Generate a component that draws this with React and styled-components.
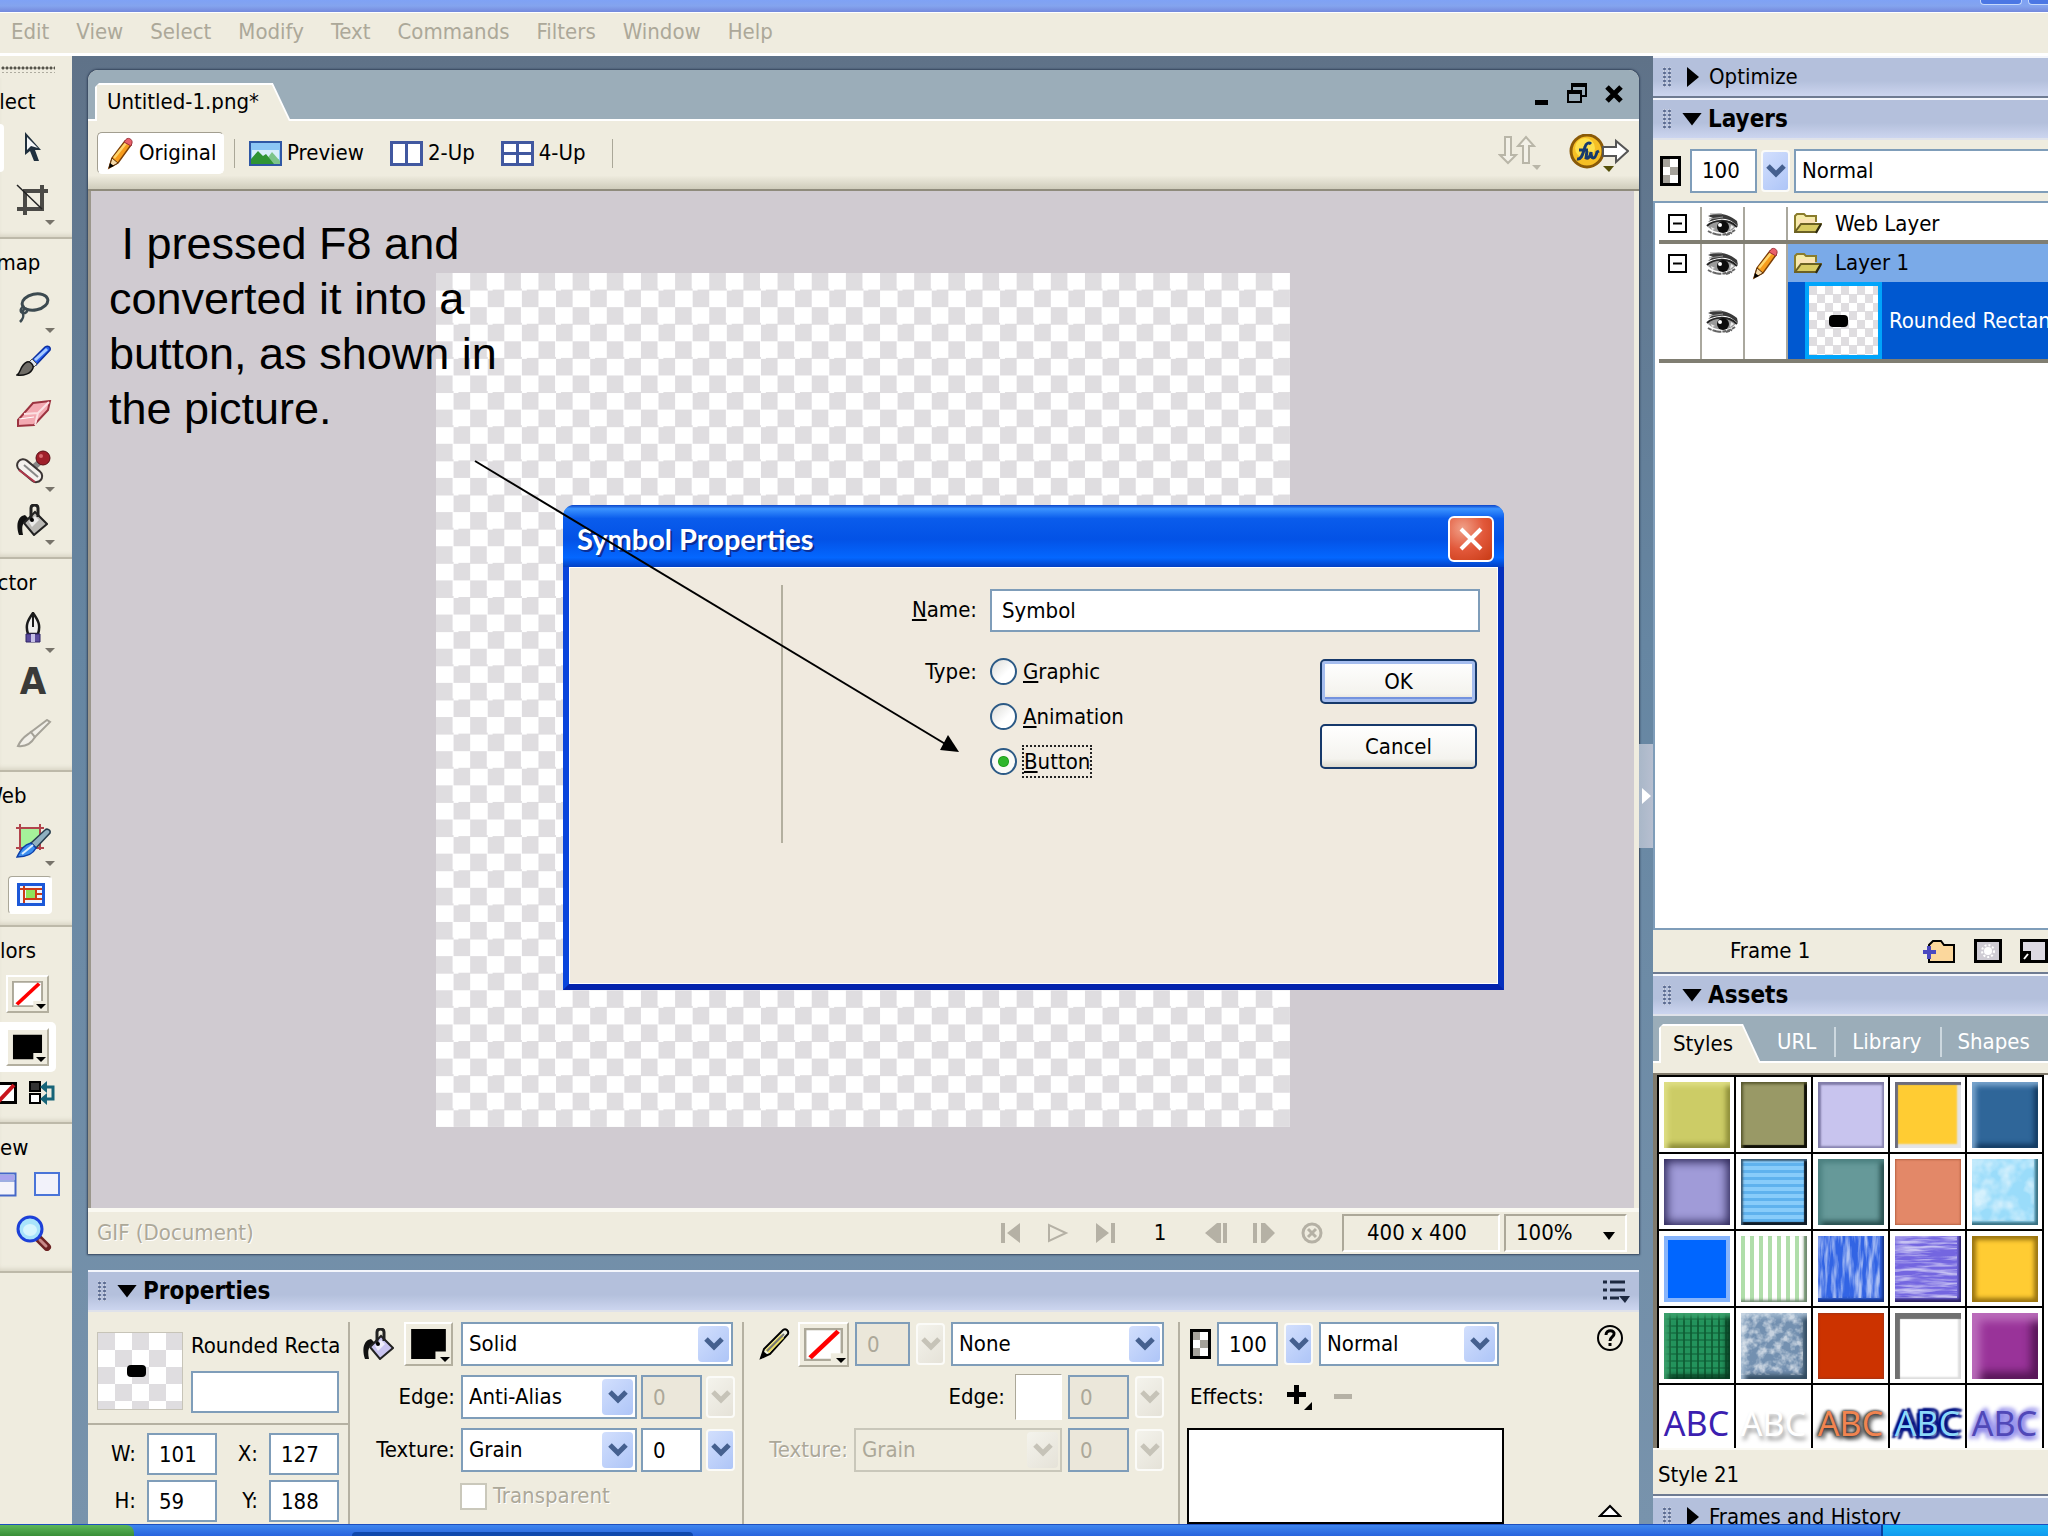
import { useState } from 'react';

import styled, { createGlobalStyle, css } from 'styled-components';

const beige = '#efecdf';
const line = '#aca899';
const fieldBorder = '#7f9db9';
const checker = (size) => css`
  background: repeating-conic-gradient(#fff 0 25%, #dfdde0 0 50%) 0 0 / ${size};
`;

const GlobalStyle = createGlobalStyle`
  * { box-sizing: border-box; }
  body {
    margin: 0;
    overflow: hidden;
    color: #000;
    font: 22px/28px "DejaVu Sans Condensed", "DejaVu Sans", sans-serif;
  }
  button, input, select { font: inherit; color: inherit; margin: 0; border-radius: 0; }
  button { background: none; border: 0; padding: 0; }
  svg { display: block; flex: none; }
`;

const Page = styled.div`
  position: relative;
  display: flex;
  flex-direction: column;
  height: 100vh;
  overflow: hidden;
  background: ${beige};
`;

const TitleBar = styled.div`
  display: flex;
  justify-content: flex-end;
  gap: 6px;
  flex: none;
  height: 13px;
  background: linear-gradient(#7fa2f5, #84a4ee 50%, #7489dc);
  border-bottom: 1px solid #fff;
`;

const CaptionButton = styled.button`
  width: 42px;
  height: 5px;
  border: 1px solid #c5d8fb;
  border-top: 0;
  border-radius: 0 0 4px 4px;
  background: #4b77e4;

  &:last-child { margin-right: -22px; }
`;

const MenuBar = styled.nav`
  display: flex;
  gap: 27px;
  align-items: center;
  flex: none;
  height: 43px;
  padding: 0 11px 2px;
  border-bottom: 3px solid #fff;
`;

const MenuItem = styled.button`
  color: ${line};
`;

const Workspace = styled.div`
  flex: 1;
  min-height: 0;
  display: grid;
  grid-template-columns: 72px minmax(0, 1fr) 395px;
  background: linear-gradient(#5f7288, #6686a2 40%, #7893ac);
`;

const Toolbox = styled.aside`
  overflow: hidden;
  background: ${beige};
`;

const Grip = styled.div`
  height: 8px;
  width: 54px;
  margin: 9px 0 5px 1px;
  background: radial-gradient(circle, #55534a 1px, transparent 2px) 0 0 / 4px 6px;
`;

const ToolSection = styled.section`
  height: ${(p) => p.$height}px;
  padding-top: 10px;
  border-bottom: 2px solid #bdb9a9;
  box-shadow: inset 0 -4px 4px -2px #d8d4c4;
`;

const ToolTitle = styled.div`
  width: 134px;
  margin: 0 0 4px -62px;
  text-align: center;
`;

const Tool = styled.button`
  position: relative;
  display: flex;
  align-items: center;
  width: 72px;
  height: 53px;
  padding-left: 16px;

  &::before {
    content: '';
    position: absolute;
    left: 0;
    top: 4px;
    width: 4px;
    height: 48px;
    border-radius: 0 4px 4px 0;
    background: ${(p) => (p.$besideActive ? '#fff' : 'none')};
  }
`;

const Flyout = styled.i`
  position: absolute;
  left: 45px;
  bottom: 1px;
  border: 5px solid transparent;
  border-top-color: ${(p) => p.$color || '#77736a'};
  border-bottom: 0;
`;

const PressedTool = styled(Tool)`
  width: 44px;
  height: 38px;
  margin: 9px 0 0 8px;
  padding-left: 8px;
  background: #fff;
  border: 1px solid;
  border-color: #aaa798 #fff #fff #aaa798;
  border-radius: 4px;
`;

const TextGlyph = styled.span`
  width: 34px;
  text-align: center;
  color: #3a3a38;
  font: bold 38px/40px "DejaVu Sans Condensed", sans-serif;
`;

const SwatchRow = styled.div`
  display: flex;
  align-items: center;
  width: 56px;
  height: 50px;
  margin-bottom: 3px;
  padding-left: 6px;
  border-radius: 0 5px 5px 0;
  background: ${(p) => (p.$active ? '#fff' : 'none')};
`;

const SwatchButton = styled.button`
  position: relative;
  flex: none;
  width: ${(p) => p.$width || 43}px;
  height: ${(p) => p.$height || 38}px;
  padding: 4px;
  border: 2px solid;
  border-color: #fff #b3af9f #b3af9f #fff;
  background: ${beige};

  svg { width: 100%; height: 100%; }
  ${Flyout} { left: auto; right: 1px; bottom: 2px; }
`;

const MiniRow = styled.div`
  display: flex;
  align-items: center;
  justify-content: space-between;
  width: ${(p) => p.$width || 56}px;
  height: 36px;
  margin-bottom: 4px;
`;

const Center = styled.main`
  display: flex;
  flex-direction: column;
  gap: 16px;
  min-width: 0;
  min-height: 0;
  padding: 14px 14px 0 16px;
  position: relative;
`;

const Splitter = styled.button`
  position: absolute;
  right: 0;
  top: 688px;
  width: 14px;
  height: 104px;
  padding-left: 3px;
  background: linear-gradient(90deg, #a9b7c8, #b7bfd0);
`;

const Document = styled.section`
  flex: 1;
  min-height: 0;
  display: flex;
  flex-direction: column;
  border-radius: 10px 10px 0 0;
  overflow: hidden;
  background: ${beige};
  box-shadow: 0 0 2px 1px #34445c;
`;

const DocTabs = styled.div`
  display: flex;
  align-items: flex-end;
  flex: none;
  height: 51px;
  padding-left: 7px;
  background: #9badb9;
  border-bottom: 2px solid #fff;
`;

const Tab = styled.button`
  position: relative;
  isolation: isolate;
  height: ${(p) => p.$height}px;
  padding: 0 ${(p) => p.$right}px 0 ${(p) => p.$left}px;
  margin-bottom: -2px;
  background: #fff;
  clip-path: polygon(0 4px, 4px 0, calc(100% - 18px) 0, 100% 100%, 0 100%);

  &::before {
    content: '';
    position: absolute;
    z-index: -1;
    inset: 2px 2px 0 2px;
    background: ${beige};
    clip-path: polygon(0 0, calc(100% - 17px) 0, 100% 100%, 0 100%);
  }
`;

const WindowButtons = styled.div`
  display: flex;
  align-items: center;
  gap: 18px;
  height: 51px;
  margin-left: auto;
  padding-right: 16px;
`;

const DocToolbar = styled.div`
  display: flex;
  align-items: center;
  flex: none;
  height: 70px;
  padding: 0 10px 4px 9px;
  border-bottom: 2px solid #8f8b7c;
  background: linear-gradient(${beige} 80%, #cfccbb);
`;

const ViewButton = styled.button`
  display: flex;
  align-items: center;
  gap: 5px;
  height: 42px;
  margin-right: 26px;
  white-space: nowrap;
`;

const ActiveView = styled(ViewButton)`
  width: 127px;
  margin-right: 10px;
  padding-left: 9px;
  background: #fff;
  border: 1px solid;
  border-color: #a29e90 #fff #fff #a29e90;
  border-radius: 5px;
`;

const Divider = styled.i`
  width: 1px;
  height: 29px;
  margin-right: 14px;
  background: #aaa798;
`;

const ToolbarRight = styled.div`
  display: flex;
  gap: 27px;
  margin-left: auto;
`;

const Canvas = styled.div`
  flex: 1;
  min-height: 0;
  display: flex;
  align-items: center;
  justify-content: center;
  margin-right: 5px;
  border-left: 3px solid #9b978c;
  background: #d0cbd1;
`;

const Artboard = styled.div`
  width: 854px;
  height: 854px;
  ${checker('4% 4%')}
`;

const StatusBar = styled.footer`
  display: flex;
  align-items: center;
  flex: none;
  height: 46px;
  padding: 0 12px 0 9px;
  border-top: 4px solid #faf9f2;
`;

const Disabled = styled.span`
  color: ${line};
  text-shadow: 1px 1px #fff;
`;

const Transport = styled.div`
  display: flex;
  align-items: center;
  gap: 26px;
  margin-left: auto;
  margin-right: 15px;
`;

const FrameNumber = styled.span`
  width: 38px;
  text-align: center;
`;

const StatusCell = styled.div`
  display: flex;
  align-items: center;
  justify-content: space-between;
  width: ${(p) => p.$width}px;
  height: 38px;
  padding: 0 ${(p) => p.$pad}px;
  margin-left: 4px;
  border: 2px solid;
  border-color: #aca899 #fff #fff #aca899;
  white-space: nowrap;
`;

const Panel = styled.section`
  display: flex;
  flex-direction: column;
  flex: none;
  height: 254px;
  overflow: hidden;
  background: ${beige};
`;

const PanelHeader = styled.header`
  display: flex;
  align-items: center;
  flex: none;
  height: 42px;
  padding: 0 9px;
  background: linear-gradient(#b4c0dc 60%, #ccd5ef);
  border-top: 2px solid #f4f6fc;
  border-bottom: 2px solid ${(p) => (p.$open ? '#dfe2ea' : '#6e7b92')};
  font-weight: ${(p) => (p.$open ? 'bold' : 'normal')};
  font-size: ${(p) => (p.$open ? 24 : 22)}px;
  white-space: nowrap;

  &::before {
    content: '';
    width: 11px;
    height: 20px;
    background: radial-gradient(circle, #5a6a90 1px, #e6ebf8 2px, transparent 2px) 0 0 / 5px 4px;
  }
`;

const Caret = styled.i`
  width: ${(p) => (p.$open ? 20 : 12)}px;
  height: ${(p) => (p.$open ? 13 : 20)}px;
  margin: ${(p) => (p.$open ? '0 6px 0 9px' : '0 10px 0 14px')};
  background: #000;
  clip-path: ${(p) => (p.$open ? 'polygon(0 0, 100% 0, 50% 100%)' : 'polygon(0 0, 100% 50%, 0 100%)')};
`;

const MenuIcon = styled.svg`
  margin-left: auto;
`;

const PropBody = styled.div`
  flex: 1;
  min-height: 0;
  display: grid;
  grid-template-columns: 262px 394px 436px minmax(0, 1fr);
  grid-template-rows: minmax(0, 1fr);
  padding-top: 10px;
`;

const SizeGroup = styled.div`
  border-right: 2px solid #b5b1a2;
`;

const PropGroup = styled.div`
  display: flex;
  flex-direction: column;
  gap: 9px;
  padding: 0 ${(p) => p.$right}px 0 ${(p) => p.$left}px;
  border-right: 2px solid #b5b1a2;
`;

const Row = styled.div`
  display: flex;
  align-items: center;
  flex: none;
  gap: ${(p) => p.$gap || 6}px;
  height: 44px;
  justify-content: ${(p) => (p.$end ? 'flex-end' : 'flex-start')};
`;

const Lead = styled.div`
  display: flex;
  align-items: center;
  justify-content: ${(p) => (p.$text ? 'flex-end' : 'flex-start')};
  gap: 10px;
  flex: none;
  width: 95px;
  padding-right: ${(p) => (p.$text ? 2 : 0)}px;
`;

const Field = styled.input`
  width: ${(p) => p.$width}px;
  height: ${(p) => p.$height || 44}px;
  flex: none;
  padding: 0 0 0 10px;
  border: 2px solid ${fieldBorder};
  background: #fff;

  &:disabled { background: #ebe7da; color: ${line}; }
`;

const DropWrap = styled.span`
  position: relative;
  display: block;
  flex: ${(p) => (p.$width ? 'none' : 1)};
  width: ${(p) => (p.$width ? `${p.$width}px` : 'auto')};
  height: 44px;
`;

const DropSelect = styled.select`
  appearance: none;
  width: 100%;
  height: 100%;
  padding: 0 36px 0 6px;
  border: 2px solid ${fieldBorder};
  background: #fff;
  opacity: 1;

  &:disabled { background: ${beige}; color: ${line}; border-color: #c9c7ba; }
`;

const dropFace = css`
  display: flex;
  align-items: center;
  justify-content: center;
  border-radius: 4px;
  color: ${(p) => (p.$off ? '#c6c3b8' : '#45608f')};
  background: ${(p) => (p.$off ? 'linear-gradient(135deg, #f4f3ec, #e5e2d8)' : 'linear-gradient(135deg, #d2dffd, #aec5f7)')};
`;

const DropArrow = styled.span`
  ${dropFace}
  position: absolute;
  top: 4px;
  right: 4px;
  bottom: 4px;
  width: 31px;
  pointer-events: none;
`;

const DropButton = styled.button`
  ${dropFace}
  flex: none;
  width: 29px;
  height: 42px;
  border: 2px solid #fbfbf8;
`;

const Thumb = styled.div`
  display: flex;
  align-items: center;
  justify-content: center;
  flex: none;
  width: ${(p) => p.$width}px;
  height: ${(p) => p.$height}px;
  padding: ${(p) => (p.$selected ? '0 10px 0 0' : '0 8px 0 0')};
  border: ${(p) => (p.$selected ? '4px solid #00a5fb' : '1px solid #c7c4b8')};
  ${(p) => checker(p.$selected ? '16px 17px' : '34px 34px')}

  &::after {
    content: '';
    width: 19px;
    height: 12px;
    border-radius: 4px;
    background: #000;
  }
`;

const ObjectInfo = styled.div`
  display: flex;
  gap: 8px;
  height: 103px;
  padding: 10px 8px 0 9px;
  border-bottom: 2px solid #b5b1a2;
`;

const ObjectName = styled.label`
  flex: 1;
  min-width: 0;
  overflow: hidden;
  white-space: nowrap;

  ${Field} { display: block; margin-top: 11px; }
`;

const Dimensions = styled.div`
  display: grid;
  grid-template-columns: 45px 70px 42px 70px;
  gap: 5px 5px;
  align-items: center;
  padding: 8px 0 0 9px;

  label { padding-right: 6px; text-align: right; }
`;

const WhiteBox = styled.span`
  width: 47px;
  height: 46px;
  margin-left: 4px;
  border: 1px solid;
  border-color: #aca899 #fff #fff #aca899;
  background: #fff;
`;

const CheckLabel = styled.label`
  display: flex;
  align-items: center;
  gap: 6px;
  height: 30px;
  margin-left: 98px;
  color: ${line};
  text-shadow: 1px 1px #fff;

  input {
    appearance: none;
    width: 27px;
    height: 27px;
    border: 2px solid #cac8bb;
    background: #fff;
  }
`;

const EffectsBody = styled.div`
  display: flex;
  justify-content: space-between;
  padding: 0 15px 0 10px;
`;

const EffectsList = styled.div`
  width: 317px;
  height: 110px;
  margin-left: -3px;
  border: 2px solid #000;
  background: #fff;
`;

const Stack = styled.div`
  display: flex;
  flex-direction: column;
  gap: 9px;
`;

const SideIcons = styled.div`
  display: flex;
  flex-direction: column;
  align-items: center;
  justify-content: space-between;
  padding: 2px 0 6px;
`;

const Dock = styled.aside`
  display: flex;
  flex-direction: column;
  min-height: 0;
  overflow: hidden;
  background: ${beige};
`;

const LayerSettings = styled.div`
  display: flex;
  align-items: center;
  gap: 4px;
  flex: none;
  height: 61px;
  padding-left: 7px;

  svg + ${Field} { margin-left: 5px; }
`;

const LayerList = styled.div`
  flex: 1;
  min-height: 0;
  padding: 4px 0 0 4px;
  background: #fff;
  border: 2px solid ${fieldBorder};
  border-right: 0;
`;

const LayerRow = styled.div`
  display: grid;
  grid-template-columns: 43px 43px 43px 1fr;
  height: ${(p) => p.$height}px;
  border-bottom: ${(p) => (p.$last ? 4 : 0)}px solid #807e72;
`;

const LayerCell = styled.div`
  display: flex;
  align-items: center;
  justify-content: ${(p) => (p.$center ? 'center' : 'flex-end')};
  padding-right: ${(p) => (p.$center ? 0 : 13)}px;
  border-right: 2px solid #aaa89e;
`;

const LayerName = styled.div`
  display: flex;
  align-items: center;
  gap: ${(p) => (p.$item ? 7 : 13)}px;
  padding-left: ${(p) => (p.$item ? 17 : 6)}px;
  overflow: hidden;
  white-space: nowrap;
  background: ${(p) => p.$bg || '#fff'};
  color: ${(p) => (p.$item ? '#fff' : '#000')};
`;

const FrameRow = styled.div`
  display: flex;
  align-items: center;
  flex: none;
  gap: 18px;
  height: 44px;
  padding-left: 77px;
  border-bottom: 2px solid #6e7b92;
  white-space: nowrap;

  span { width: 190px; }
`;

const AssetTabs = styled.div`
  display: flex;
  align-items: flex-end;
  flex: none;
  height: 47px;
  padding-left: 6px;
  background: #9badb9;
  border-bottom: 2px solid #fff;
`;

const QuietTab = styled.button`
  height: 38px;
  padding: 0 18px 0 16px;
  color: #fff;
  flex: none;
`;

const TabDivider = styled.i`
  width: 2px;
  height: 30px;
  margin-bottom: 4px;
  background: #cdd8df;
`;

const StyleGrid = styled.div`
  display: grid;
  grid-template-columns: repeat(5, 77px);
  grid-auto-rows: 77px;
  flex: none;
  height: 375px;
  overflow: hidden;
  margin-top: 10px;
  border-left: 4px solid #807a6c;
  border-top: 2px solid #807a6c;
  background: #fff;
`;

const StyleCell = styled.button`
  display: flex;
  align-items: center;
  justify-content: center;
  width: 79px;
  height: 79px;
  border: 2px solid #000;
`;

const StyleSwatch = styled.span`
  width: 66px;
  height: 66px;
  background: ${(p) => p.$bg};
  box-shadow: ${(p) => p.$shadow};
`;

const StyleText = styled.span`
  font: 34px/40px "Noto Sans", sans-serif;
  color: ${(p) => p.$color};
  text-shadow: ${(p) => p.$shadow};
`;

const StyleName = styled.div`
  flex: none;
  height: 46px;
  padding: 11px 5px 0;
  border-top: 2px solid #fbfaf4;
`;

const ClippedHeader = styled.div`
  flex: none;
  height: 30px;
  overflow: hidden;
  border-top: 2px solid #6e7b92;
`;

const Taskbar = styled.footer`
  display: grid;
  grid-template-columns: 134px 218px 341px 1fr 167px;
  align-items: end;
  flex: none;
  height: 12px;
  background: linear-gradient(#3f86ee, #2763dd);
  border-top: 1px solid #1d4fbf;
`;

const Start = styled.button`
  height: 11px;
  border-radius: 0 8px 0 0;
  background: linear-gradient(#5db75a, #388e36);
`;

const TaskButton = styled.button`
  grid-column: 3;
  height: 4px;
  border-radius: 4px 4px 0 0;
  background: #0e48ad;
`;

const Tray = styled.div`
  grid-column: 5;
  height: 11px;
  border-left: 2px solid #0b3f9c;
  background: linear-gradient(#17b4f6, #109aee);
`;

const Dialog = styled.form`
  position: absolute;
  left: 563px;
  top: 505px;
  width: 941px;
  border: 6px solid #0a45dc;
  border-top: 0;
  border-bottom-color: #0423ac;
  border-right-color: #0530bd;
  border-radius: 12px 12px 0 0;
  background: #0a55e8;
`;

const DialogTitle = styled.header`
  display: flex;
  align-items: center;
  justify-content: space-between;
  height: 62px;
  margin: 0 -6px;
  padding: 5px 10px 0 14px;
  border-radius: 11px 11px 0 0;
  background: linear-gradient(#0b43c8, #3b93ff 6%, #0a5cec 22%, #0352e6 55%, #0467ff 85%, #0340c4);
  color: #fff;
  font: bold 29px/36px Lato, sans-serif;
  text-shadow: 2px 2px #0b2f96;
`;

const CloseButton = styled.button`
  width: 46px;
  height: 46px;
  border: 2px solid #fff;
  border-radius: 6px;
  padding: 7px;
  background: radial-gradient(circle at 30% 25%, #f0a088, #e2583a 50%, #c83a14);
`;

const DialogBody = styled.div`
  display: grid;
  grid-template-columns: 213px 1fr;
  height: 417px;
  padding: 17px 17px 0 0;
  border: 1px solid #fff;
  background: #f0eadf;
`;

const Pane = styled.div`
  height: 258px;
  border-right: 2px solid #b3af9f;
`;

const DialogForm = styled.div`
  display: grid;
  grid-template-columns: 207px 1fr 160px;
  grid-template-rows: 43px 138px;
  row-gap: 29px;
  padding-top: 4px;
`;

const FieldLabel = styled.label`
  justify-self: end;
  padding: 7px 13px 0 0;
`;

const TypeLabel = styled.span`
  justify-self: end;
  padding: 0 13px 0 0;
  margin-top: -3px;
`;

const NameField = styled.input`
  grid-column: 2 / 4;
  height: 43px;
  padding: 0 10px;
  border: 2px solid ${fieldBorder};
  background: #fff;
`;

const RadioList = styled.div`
  display: flex;
  flex-direction: column;
  gap: 17px;
  margin-top: -4px;
`;

const RadioLabel = styled.label`
  display: flex;
  align-items: center;
  gap: 5px;
  height: 28px;

  input {
    appearance: none;
    width: 27px;
    height: 27px;
    border: 2px solid #2c5a86;
    border-radius: 50%;
    background: linear-gradient(135deg, #dcdcd8, #fff 60%);
  }

  input:checked {
    background: radial-gradient(circle, #2fb62c 4px, #23a11f 5px, transparent 6px), #fafaf7;
  }

  span {
    height: 33px;
    line-height: 31px;
    border: 1px dotted transparent;
  }

  input:checked + span { border: 2px dotted #222; line-height: 29px; }
`;

const DialogButtons = styled.div`
  display: flex;
  flex-direction: column;
  gap: 20px;
  align-items: flex-start;
  margin-top: -2px;
`;

const DialogButton = styled.button`
  width: 157px;
  height: 45px;
  border: 2px solid #16396b;
  border-radius: 5px;
  background: linear-gradient(#fff, #f4f3ee 80%, #dcd9ce);
  box-shadow: ${(p) => (p.$primary ? 'inset 0 0 0 3px #a5bdee, inset 0 -5px 0 #7492de' : 'none')};
`;

const Note = styled.p`
  position: absolute;
  left: 109px;
  top: 216px;
  margin: 0;
  font: 45px/55px "Liberation Sans", Arial, sans-serif;
  white-space: pre;
`;

const Pointer = styled.svg`
  position: absolute;
  left: 470px;
  top: 455px;
  pointer-events: none;
`;

const Chevron = () => (
  <svg width="20" height="14" viewBox="0 0 20 14" fill="none" stroke="currentColor" strokeWidth="5">
    <path d="M2 2l8 8 8-8" />
  </svg>
);

const Dropdown = ({ label, value, width, disabled }) => (
  <DropWrap $width={width}>
    <DropSelect aria-label={label} disabled={disabled} defaultValue={value}>
      <option>{value}</option>
    </DropSelect>
    <DropArrow $off={disabled}><Chevron /></DropArrow>
  </DropWrap>
);

const NumberField = ({ label, value, width = 61, disabled }) => (
  <>
    <Field aria-label={label} $width={width} defaultValue={value} disabled={disabled} />
    <DropButton type="button" aria-label={`${label} slider`} $off={disabled}><Chevron /></DropButton>
  </>
);

const OpacityIcon = () => (
  <svg width="21" height="30" viewBox="0 0 21 30">
    <path fill="#fff" stroke="#000" strokeWidth="3" d="M1.5 1.5h18v27h-18z" />
    <path fill="#a5a29b" d="M3 3h7v8H3zM10 11h8v8h-8zM3 19h7v8H3z" />
  </svg>
);

const PencilIcon = () => (
  <svg width="27" height="34" viewBox="0 0 27 34">
    <path d="M2 32l3-10L18 5l6 4-13 18z" fill="#f79c1c" stroke="#7d4008" strokeWidth="1.5" />
    <path d="M7 22L19 7" stroke="#ffd56a" strokeWidth="2.5" />
    <path d="M18 5c2-5 8-2 7 2l-1 3-7-4z" fill="#e8606a" stroke="#9c3038" />
    <path d="M2 32l3-10 6 5z" fill="#f5d9a8" stroke="#5c3208" />
    <path d="M2 32l1-5 4 3z" fill="#000" />
  </svg>
);

const PreviewIcon = () => (
  <svg width="33" height="25" viewBox="0 0 33 25">
    <path fill="#8cc6f5" stroke="#2f57a5" strokeWidth="2" d="M1 1h31v23H1z" />
    <path fill="#d8eefb" d="M3 9h27v9H3z" />
    <path fill="#7cc48a" d="M14 23l9-12 8 9v3z" />
    <path fill="#2f9434" d="M2 18l7-8 5 5 3-2 8 10H2z" />
  </svg>
);

const SplitIcon = ({ four }) => (
  <svg width="33" height="25" viewBox="0 0 33 25">
    <path fill="#fff" stroke="#4158a0" strokeWidth="3" d="M1.500 1.500h30v22h-30z" />
    <path stroke="#4158a0" strokeWidth="3" d={four ? 'M16.500 1v23M1 12.500h31' : 'M16.500 1v23'} />
  </svg>
);

const EyeIcon = () => (
  <svg width="33" height="24" viewBox="0 0 33 24" fill="none" stroke="#222">
    <path d="M2 15C7 6 22 5 30 14c-4 8-20 9-28 1z" fill="#9a9a9a" stroke="none" />
    <path d="M2 4c9-4 19-3 29 5l1 5-4-3C21 5 13 6 2 10l5-4z" fill="#3a3a3a" stroke="none" />
    <path d="M4 2h12M3 7l14-2" stroke="#999" />
    <path d="M1 14C7 8 22 6 31 15" strokeWidth="2" />
    <circle cx="17" cy="15" r="6" fill="#0c0c0c" stroke="none" />
    <circle cx="14" cy="13" r="2" stroke="none" fill="#fff" />
    <path d="M5 15l4 2-3 1zM25 13l3 2-4 3z" fill="#eee" stroke="none" />
    <path d="M2 19c8 5 19 5 27-1M9 22l5 1M20 23l6-2" stroke="#666" strokeWidth="2" strokeDasharray="4 1" />
  </svg>
);

const FolderIcon = () => (
  <svg width="28" height="21" viewBox="0 0 28 21">
    <path d="M1 19V3l2-2h7l2 2h10v6" fill="#f5eca8" stroke="#8a7c2c" strokeWidth="2" />
    <path d="M4 6h17v6H4z" fill="#fbe3b4" />
    <path d="M1 19l6-8h20l-5 8z" fill="#d8cb62" stroke="#6c6123" strokeWidth="2" />
    <path d="M22 20l5-9" stroke="#2e2a10" strokeWidth="2" />
  </svg>
);

const MinusBox = () => (
  <svg width="19" height="19" viewBox="0 0 19 19">
    <path fill="#fff" stroke="#000" strokeWidth="2" d="M1 1h17v17H1z" />
    <path stroke="#000" strokeWidth="2" d="M5 9.500h9" />
  </svg>
);

const BucketIcon = ({ fill = '#b9b8b4' }) => (
  <svg width="32" height="32" viewBox="0 0 32 32">
    <path d="M3 31C-1 19 3 12 9 11l4 4c-6 2-8 7-6 16z" fill="#111" />
    <path d="M8 19L19 8l12 12-13 11z" fill={fill} stroke="#222" strokeWidth="2" />
    <path d="M13 18l6-6 4 4-7 7z" fill="#fff" opacity=".7" />
    <path d="M15 16V4c0-4 7-4 7 0v9" fill="none" stroke="#222" strokeWidth="3" />
    <circle cx="16" cy="16" r="2" />
  </svg>
);

const tools = {
  pointer: (
    <svg width="30" height="32" viewBox="0 0 30 32">
      <path d="M9 1v23l5-4 4 10h5l-4-11h6z" fill="#1f2f3d" />
      <path d="M11 6v13l4-4 7 2z" fill="#f4f6f8" />
    </svg>
  ),
  crop: (
    <svg width="34" height="32" viewBox="0 0 34 32" fill="none" stroke="#4b4a46" strokeWidth="4">
      <path d="M9 31V7h23M1 25h25V1" />
      <path d="M1 1l25 24" strokeWidth="1.5" stroke="#222" />
    </svg>
  ),
  lasso: (
    <svg width="34" height="32" viewBox="0 0 34 32" fill="none" stroke="#3c4a50" strokeWidth="3">
      <ellipse cx="19" cy="10" rx="13" ry="8" transform="rotate(-12 19 10)" />
      <path d="M8 14c-5 3-4 8 1 7 5-2 0-7-2-2-1 4 3 5-3 11" strokeWidth="2.500" />
    </svg>
  ),
  brush: (
    <svg width="36" height="32" viewBox="0 0 36 32">
      <path d="M15 16L29 2c3-2 6 0 5 3L20 20z" fill="#2a62f0" stroke="#0c2fa0" strokeWidth="1.500" />
      <path d="M19 15L31 4" stroke="#a9ccff" strokeWidth="3" />
      <path d="M13 17l3-3 5 5-3 3z" fill="#dfe6ee" stroke="#555" />
      <path d="M1 30c4-2 3-10 10-13 3-1 7 3 6 6-2 6-10 8-16 7z" fill="#6f6c66" stroke="#111" strokeWidth="1.500" />
    </svg>
  ),
  eraser: (
    <svg width="36" height="28" viewBox="0 0 36 28" stroke="#9c3340" strokeWidth="2">
      <path d="M2 20L17 3l17-2-2 9-14 15-16 1z" fill="#f3aab2" />
      <path d="M8 14l14-1 11-11M22 13l-3 12" fill="none" stroke="#fbe0e3" />
      <path d="M3 19l15-2" stroke="#fff" strokeWidth="1" />
    </svg>
  ),
  stamp: (
    <svg width="36" height="34" viewBox="0 0 36 34">
      <path d="M16 19l11-10" stroke="#888" strokeWidth="6" />
      <rect x="-1" y="15" width="29" height="12" rx="6" transform="rotate(40 14 21)" fill="#f4f1ee" stroke="#3b3534" strokeWidth="2" />
      <path d="M3 20l16 12" stroke="#b0364a" strokeWidth="2" />
      <path d="M8 15l14 12" stroke="#888" strokeWidth="2" />
      <circle cx="27" cy="8" r="7" fill="#9f1f2a" stroke="#5a0d14" />
      <circle cx="25" cy="6" r="2" fill="#d86a70" />
    </svg>
  ),
  bucket: <BucketIcon />,
  pen: (
    <svg width="34" height="32" viewBox="0 0 34 32">
      <path d="M17 1c5 7 8 12 5 21H12C9 13 12 8 17 1z" fill="#f2f2f0" stroke="#1b1b1b" strokeWidth="2.500" />
      <path d="M17 2v13" stroke="#1b1b1b" strokeWidth="2" />
      <path d="M10 22h14v8H10z" fill="#5a4a9c" stroke="#2e2466" />
      <path d="M15 22h4v8h-4z" fill="#c5bfe6" />
    </svg>
  ),
  knife: (
    <svg width="36" height="30" viewBox="0 0 36 30" fill="#f1efe8" stroke="#a5a298" strokeWidth="2">
      <path d="M2 27C6 18 10 17 15 13l4 5c-4 7-9 10-17 9z" />
      <path d="M15 13L31 1l3 2-15 15z" />
    </svg>
  ),
  slice: (
    <svg width="36" height="34" viewBox="0 0 36 34">
      <path d="M4 4h20v20H4z" fill="#a5f29a" />
      <path d="M4 0v26M24 0v26M0 4h28M0 24h28" stroke="#b2444c" strokeWidth="2" />
      <path d="M15 19L29 6c2-2 6 0 5 3L20 24z" fill="#8fb0c0" stroke="#263c4c" strokeWidth="1.500" />
      <path d="M1 33c4-8 7-12 14-14l5 5c-3 6-9 9-19 9z" fill="#3c8ef0" stroke="#0d3fa8" strokeWidth="1.500" />
      <path d="M6 30l11-9" stroke="#dcefff" strokeWidth="2" />
    </svg>
  ),
  slices: (
    <svg width="28" height="24" viewBox="0 0 28 24">
      <path d="M1.500 1.500h25v20h-25z" fill="#eef4ff" stroke="#1c58d8" strokeWidth="3" />
      <path d="M9 7h10v8H9z" fill="#8ee45a" />
      <path d="M7 3v17M3 6h22M7 16h18M19 6v10M19 11h6" stroke="#cc3b16" strokeWidth="2" fill="none" />
    </svg>
  ),
  zoom: (
    <svg width="36" height="36" viewBox="0 0 36 36">
      <path d="M23 24l8 8" stroke="#6e2323" strokeWidth="8" strokeLinecap="round" />
      <path d="M24 25l6 6" stroke="#c88a88" strokeWidth="3" strokeLinecap="round" />
      <circle cx="14" cy="14" r="12" fill="#a9e4fb" stroke="#1c40d8" strokeWidth="3" />
      <ellipse cx="14" cy="15" rx="7" ry="6" fill="#d7f6fe" />
    </svg>
  ),
};

const NoneSwatch = () => (
  <svg viewBox="0 0 32 30" preserveAspectRatio="none">
    <path d="M1 1h30v28H1z" fill="#fff" stroke="#aca899" strokeWidth="2" />
    <path d="M5 27L28 3" stroke="#f00" strokeWidth="4" />
    <path d="M22 23h10v7H22z" fill={beige} />
  </svg>
);

const BlackSwatch = () => (
  <svg viewBox="0 0 32 30" preserveAspectRatio="none">
    <path d="M1 1h30v21h-9v7H1z" />
  </svg>
);

const ToolButton = ({ name, flyout, besideActive }) => (
  <Tool type="button" aria-label={name} $besideActive={besideActive}>
    {tools[name]}
    {flyout && <Flyout />}
  </Tool>
);

const Tools = () => (
  <Toolbox>
    <Grip />
    <ToolSection $height={161}>
      <ToolTitle>Select</ToolTitle>
      <ToolButton name="pointer" besideActive />
      <ToolButton name="crop" flyout />
    </ToolSection>
    <ToolSection $height={320}>
      <ToolTitle>Bitmap</ToolTitle>
      <ToolButton name="lasso" flyout />
      <ToolButton name="brush" />
      <ToolButton name="eraser" />
      <ToolButton name="stamp" flyout />
      <ToolButton name="bucket" flyout />
    </ToolSection>
    <ToolSection $height={213}>
      <ToolTitle>Vector</ToolTitle>
      <ToolButton name="pen" flyout />
      <Tool type="button" aria-label="text"><TextGlyph>A</TextGlyph></Tool>
      <ToolButton name="knife" />
    </ToolSection>
    <ToolSection $height={155}>
      <ToolTitle>Web</ToolTitle>
      <ToolButton name="slice" flyout />
      <PressedTool type="button" aria-label="show slices">{tools.slices}</PressedTool>
    </ToolSection>
    <ToolSection $height={197}>
      <ToolTitle>Colors</ToolTitle>
      <SwatchRow>
        <SwatchButton type="button" aria-label="stroke"><NoneSwatch /><Flyout $color="#000" /></SwatchButton>
      </SwatchRow>
      <SwatchRow $active>
        <SwatchButton type="button" aria-label="fill"><BlackSwatch /><Flyout $color="#000" /></SwatchButton>
      </SwatchRow>
      <MiniRow>
        <svg width="17" height="22" viewBox="0 0 17 22">
          <path d="M-8 1.500h23.500v19H-8" fill="#fff" stroke="#000" strokeWidth="3" />
          <path d="M-2 20L14 3" stroke="#c8141c" strokeWidth="4" />
        </svg>
        <svg width="27" height="24" viewBox="0 0 27 24">
          <path d="M1 1h10v9H1z" fill="#333" stroke="#000" strokeWidth="2" />
          <path d="M1 13h10v9H1z" fill="#fff" stroke="#000" strokeWidth="2" />
          <path d="M16 6h8v12h-8" fill="none" stroke="#176478" strokeWidth="3" />
          <path d="M11 6l7-6v12zM11 18l7-6v12z" fill="#176478" />
        </svg>
      </MiniRow>
    </ToolSection>
    <ToolSection $height={149}>
      <ToolTitle>View</ToolTitle>
      <MiniRow $width={60}>
        <svg width="17" height="25" viewBox="0 0 17 25">
          <path d="M-8 1.500h23.500v22H-8z" fill="#f4f4fa" stroke="#4668c8" strokeWidth="2" />
          <path d="M0 3h14v5H0z" fill="#a9a4ee" />
          <path d="M0 9h15" stroke="#4668c8" />
        </svg>
        <svg width="26" height="25" viewBox="0 0 26 25">
          <path d="M1 1h24v22H1z" fill="#f2f2fa" stroke="#4a74d8" strokeWidth="2" />
        </svg>
      </MiniRow>
      <ToolButton name="zoom" />
    </ToolSection>
  </Toolbox>
);

const DocumentWindow = () => (
  <Document>
    <DocTabs>
      <Tab type="button" $height={38} $left={12} $right={32}>Untitled-1.png*</Tab>
      <WindowButtons>
        <button type="button" aria-label="Minimize">
          <svg width="14" height="26" viewBox="0 0 14 26"><path d="M0 19h13v5H0z" /></svg>
        </button>
        <button type="button" aria-label="Restore">
          <svg width="20" height="21" viewBox="0 0 20 21" fill="none" stroke="#000" strokeWidth="2">
            <path d="M5 7V1h14v12h-5" /><path d="M5 2h14" strokeWidth="4" />
            <path d="M1 8h13v11H1z" /><path d="M1 9h13" strokeWidth="4" />
          </svg>
        </button>
        <button type="button" aria-label="Close">
          <svg width="18" height="18" viewBox="0 0 18 18" stroke="#000" strokeWidth="5"><path d="M2 2l14 14M16 2L2 16" /></svg>
        </button>
      </WindowButtons>
    </DocTabs>
    <DocToolbar>
      <ActiveView type="button"><PencilIcon />Original</ActiveView>
      <Divider />
      <ViewButton type="button"><PreviewIcon />Preview</ViewButton>
      <ViewButton type="button"><SplitIcon />2-Up</ViewButton>
      <ViewButton type="button"><SplitIcon four />4-Up</ViewButton>
      <Divider />
      <ToolbarRight>
        <button type="button" aria-label="File management">
          <svg width="44" height="36" viewBox="0 0 44 36" fill="#f3f1e8" stroke="#b9b6a8" strokeWidth="2">
            <path d="M7 2h6v18h5l-8 8-8-8h5zM25 28h6V11h5l-8-9-8 9h5z" />
            <path d="M34 30h9l-4 5z" fill="#b9b6a8" stroke="none" />
          </svg>
        </button>
        <button type="button" aria-label="Quick export">
          <svg width="60" height="38" viewBox="0 0 60 38">
            <circle cx="18" cy="17" r="16" fill="#f6bf25" stroke="#8a5a08" strokeWidth="3" />
            <circle cx="16" cy="14" r="10" fill="#fde04c" />
            <path d="M8 25c5 1 6-6 8-12 1-4 4-5 6-3M10 16h9M18 17l-1 7c2 1 4-1 5-6 0 8 4 8 6 0l2-1" fill="none" stroke="#153a6e" strokeWidth="3" />
            <path d="M34 13h13V7l12 10-12 11v-6H34z" fill="#fff" stroke="#555" strokeWidth="2" />
            <path d="M34 32h11l-5 6z" fill="#55500a" />
          </svg>
        </button>
      </ToolbarRight>
    </DocToolbar>
    <Canvas><Artboard /></Canvas>
    <StatusBar>
      <Disabled>GIF (Document)</Disabled>
      <Transport>
        <svg width="20" height="20" viewBox="0 0 20 20" fill="#b5b1a5"><path d="M0 0h4v20H0zM19 0v20L6 10z" /></svg>
        <svg width="22" height="20" viewBox="0 0 22 20" fill="none" stroke="#b5b1a5" strokeWidth="2"><path d="M2 2v16l17-8z" /></svg>
        <svg width="20" height="20" viewBox="0 0 20 20" fill="#b5b1a5"><path d="M16 0h4v20h-4zM1 0v20l13-10z" /></svg>
        <FrameNumber>1</FrameNumber>
        <svg width="22" height="20" viewBox="0 0 22 20" fill="#b5b1a5"><path d="M18 0h4v20h-4zM12 0h4v20h-4L0 10z" /></svg>
        <svg width="22" height="20" viewBox="0 0 22 20" fill="#b5b1a5"><path d="M0 0h4v20H0zM8 0h4l10 10-10 10H8z" /></svg>
        <svg width="22" height="22" viewBox="0 0 22 22" fill="none" stroke="#b5b1a5"><circle cx="11" cy="11" r="9" strokeWidth="3" /><path d="M7 7l8 8M15 7l-8 8" strokeWidth="3" /></svg>
      </Transport>
      <StatusCell $width={158} $pad={23}>400 x 400</StatusCell>
      <StatusCell $width={123} $pad={10}>
        100%
        <svg width="12" height="14" viewBox="0 0 12 14"><path d="M0 6h12l-6 8z" /></svg>
      </StatusCell>
    </StatusBar>
  </Document>
);

const Properties = () => (
  <Panel>
    <PanelHeader $open>
      <Caret $open />
      Properties
      <MenuIcon width="27" height="23" viewBox="0 0 27 23">
        <path d="M0 2h4M7 2h15M0 10h4M7 10h15M0 18h4M7 18h9" stroke="#1c2840" strokeWidth="3" />
        <path d="M16 16h11l-5 7z" fill="#1c2840" />
      </MenuIcon>
    </PanelHeader>
    <PropBody>
      <SizeGroup>
        <ObjectInfo>
          <Thumb $width={86} $height={78} />
          <ObjectName>
            Rounded Recta
            <Field $width={148} $height={42} defaultValue="" />
          </ObjectName>
        </ObjectInfo>
        <Dimensions>
          <label htmlFor="w">W:</label><Field id="w" $width={70} $height={42} defaultValue="101" />
          <label htmlFor="x">X:</label><Field id="x" $width={70} $height={42} defaultValue="127" />
          <label htmlFor="h">H:</label><Field id="h" $width={70} $height={42} defaultValue="59" />
          <label htmlFor="y">Y:</label><Field id="y" $width={70} $height={42} defaultValue="188" />
        </Dimensions>
      </SizeGroup>
      <PropGroup $left={12} $right={9}>
        <Row $gap={4}>
          <Lead>
            <BucketIcon fill="#c9c4f0" />
            <SwatchButton type="button" aria-label="Fill color" $width={49} $height={44}><BlackSwatch /><Flyout $color="#000" /></SwatchButton>
          </Lead>
          <Dropdown label="Fill category" value="Solid" />
        </Row>
        <Row $gap={4}>
          <Lead $text>Edge:</Lead>
          <Dropdown label="Edge" value="Anti-Alias" width={176} />
          <NumberField label="Feather" value="0" disabled />
        </Row>
        <Row $gap={4}>
          <Lead $text>Texture:</Lead>
          <Dropdown label="Texture" value="Grain" width={176} />
          <NumberField label="Texture amount" value="0" />
        </Row>
        <CheckLabel><input type="checkbox" disabled />Transparent</CheckLabel>
      </PropGroup>
      <PropGroup $left={14} $right={14}>
        <Row>
          <svg width="34" height="34" viewBox="0 0 34 34">
            <path d="M3 31l3-9L25 3c3-2 6 1 5 4L12 27z" fill="#eef0e0" stroke="#000" strokeWidth="2" />
            <path d="M7 23l4 3L26 11l-3-4z" fill="#e9dc62" /><path d="M9 24L26 7" stroke="#777" strokeWidth="2" />
            <path d="M2 32l3-8 5 4z" />
          </svg>
          <SwatchButton type="button" aria-label="Stroke color" $width={51} $height={45}><NoneSwatch /><Flyout $color="#000" /></SwatchButton>
          <NumberField label="Tip size" value="0" width={55} disabled />
          <Dropdown label="Stroke category" value="None" />
        </Row>
        <Row $end>
          Edge:
          <WhiteBox />
          <NumberField label="Stroke edge" value="0" disabled />
        </Row>
        <Row $end>
          <Disabled>Texture:</Disabled>
          <Dropdown label="Stroke texture" value="Grain" width={208} disabled />
          <NumberField label="Stroke texture amount" value="0" disabled />
        </Row>
      </PropGroup>
      <EffectsBody>
        <Stack>
          <Row>
            <OpacityIcon />
            <NumberField label="Opacity" value="100" />
            <Dropdown label="Blend mode" value="Normal" width={180} />
          </Row>
          <Row $gap={22}>
            Effects:
            <svg width="26" height="26" viewBox="0 0 26 26"><path d="M8 1h5v7h7v5h-7v7H8v-7H1V8h7zM26 18v8h-8z" /></svg>
            <svg width="18" height="6" viewBox="0 0 18 6"><path d="M0 0h18v5H0z" fill="#b5b1a5" /></svg>
          </Row>
          <EffectsList />
        </Stack>
        <SideIcons>
          <svg width="28" height="28" viewBox="0 0 28 28" fill="none" stroke="#000" strokeWidth="2">
            <circle cx="14" cy="14" r="12" />
            <path d="M10 11c0-6 9-5 8-1 0 3-4 3-4 7M14 19v3" strokeWidth="3" />
          </svg>
          <svg width="24" height="14" viewBox="0 0 24 14"><path d="M2 12h20L12 2z" fill="#fff" stroke="#000" strokeWidth="2" /></svg>
        </SideIcons>
      </EffectsBody>
    </PropBody>
  </Panel>
);

const bevel = (light, dark) => `inset 4px 4px 5px ${light}, inset -4px -4px 5px ${dark}`;

// background, edge effect, grain of the texture (x and y frequency)
const swatches = [
  ['#cccc66', bevel('#dede84', '#8c8c38')],
  ['#999966', 'inset 2px 2px 3px #55552c, inset -3px -3px 1px #101008'],
  ['#c8c4ee', 'inset 3px 3px 2px #807ca8, inset -2px -2px 2px #8884b0'],
  ['#ffcc33', 'inset 3px 3px 1px #6c6c7c, inset -4px -4px 2px #e4e4e8'],
  ['#2f6699', bevel('#78a4cc', '#123a60')],
  ['#a09bd8', 'inset 0 0 10px 3px #2e2858'],
  ['repeating-linear-gradient(#88ccfa 0 4px, #5fb2ee 4px 7px)', 'inset 2px 2px 2px #3a5a74, inset -3px -3px 1px #101c28'],
  ['#669999', bevel('#4c8080', '#274c4c')],
  ['#e38868', 'inset 0 0 2px 1px #b86444'],
  ['#9adcfa', 'inset -3px -3px 3px #376f80', '0.05 0.05'],
  ['#0066ff', 'inset 0 0 0 4px #86b4fb'],
  ['repeating-linear-gradient(90deg, #b0deaa 0 4px, #fff 4px 9px)', 'inset -3px -2px 3px #708870'],
  ['#3264e4', 'inset -2px -3px 3px #15307c', '0.2 0.03'],
  ['#7466e0', 'inset -2px -3px 3px #292060', '0.03 0.3'],
  ['#ffcc33', 'inset 0 0 4px 4px #9a7410'],
  ['repeating-linear-gradient(transparent 0 5px, #0d5b3480 5px 7px), repeating-linear-gradient(90deg, #23935c 0 5px, #116438 5px 7px)', bevel('#3da06c', '#083a20')],
  ['#7390b0', bevel('#a4bad0', '#30485c'), '0.12 0.12'],
  ['#cc3300', 'inset 0 0 2px 1px #a43414'],
  ['#ffffff', 'inset 5px 6px 1px #707070, inset -3px -2px 2px #dddddd'],
  ['#993399', 'inset 8px 8px 8px #bb6cbb, inset -7px -7px 8px #561656'],
];

const textStyles = [
  ['#3c1fb0', 'none'],
  ['#ffffff', '2px 4px 4px #999'],
  ['#f08450', '0 0 3px #333, 0 0 3px #333, 3px 3px 4px #333, -2px 2px 4px #555'],
  ['#8cd8f8', '0 0 3px #001080, 3px 3px 2px #001080, -3px 2px 2px #001080, 3px -3px 2px #001080, -2px -2px 2px #001080'],
  ['#5048b8', '0 0 4px #8c86e8, 3px 3px 4px #8c86e8, -3px 3px 4px #8c86e8, 3px -3px 4px #8c86e8'],
];

const Grain = ({ id, frequency }) => (
  <svg width="62" height="62" viewBox="0 0 62 62">
    <filter id={id} x="0" y="0" width="100%" height="100%">
      <feTurbulence type="fractalNoise" baseFrequency={frequency} numOctaves="3" />
      <feColorMatrix values="0 0 0 0 1  0 0 0 0 1  0 0 0 0 1  3 0 0 0 -1.2" />
    </filter>
    <rect width="62" height="62" filter={`url(#${id})`} opacity=".6" />
  </svg>
);

const Layer = ({ name, height, bg, active, last }) => (
  <LayerRow $height={height} $last={last}>
    <LayerCell><MinusBox /></LayerCell>
    <LayerCell $center><EyeIcon /></LayerCell>
    <LayerCell $center>{active && <PencilIcon />}</LayerCell>
    <LayerName $bg={bg}><FolderIcon />{name}</LayerName>
  </LayerRow>
);

const RightDock = () => (
  <Dock>
    <PanelHeader><Caret />Optimize</PanelHeader>
    <PanelHeader $open><Caret $open />Layers</PanelHeader>
    <LayerSettings>
      <OpacityIcon />
      <NumberField label="Layer opacity" value="100" width={67} />
      <Dropdown label="Layer blend mode" value="Normal" width={320} />
    </LayerSettings>
    <LayerList>
      <Layer name="Web Layer" height={37} last />
      <Layer name="Layer 1" height={38} bg="#7aaae8" active />
      <LayerRow $height={81} $last>
        <LayerCell />
        <LayerCell $center><EyeIcon /></LayerCell>
        <LayerCell $center />
        <LayerName $item $bg="#0058d0">
          <Thumb $selected $width={77} $height={77} />
          Rounded Rectangle
        </LayerName>
      </LayerRow>
    </LayerList>
    <FrameRow>
      <span>Frame 1</span>
      <svg width="33" height="24" viewBox="0 0 33 24">
        <path d="M6 23V6l4-4h8l3 4h10v17z" fill="#fbd79c" stroke="#000" strokeWidth="2" />
        <path d="M0 13h13M6 7v13" stroke="#4a48c0" strokeWidth="4" />
      </svg>
      <svg width="28" height="24" viewBox="0 0 28 24">
        <path d="M1.500 1.500h25v21h-25z" fill="#cfccd4" stroke="#000" strokeWidth="3" />
        <circle cx="14" cy="12" r="4" fill="#fff" />
        <circle cx="14" cy="12" r="6" fill="none" stroke="#fff" strokeWidth="2" strokeDasharray="2 2" />
      </svg>
      <svg width="28" height="24" viewBox="0 0 28 24">
        <path d="M1.500 1.500h25v21h-25z" fill="#dcd9e2" stroke="#000" strokeWidth="3" />
        <path d="M1 12h10v11H1z" /><path d="M4 20l4-5" stroke="#fff" strokeWidth="2" />
      </svg>
    </FrameRow>
    <PanelHeader $open><Caret $open />Assets</PanelHeader>
    <AssetTabs>
      <Tab type="button" $height={39} $left={14} $right={28}>Styles</Tab>
      <QuietTab type="button">URL</QuietTab>
      <TabDivider />
      <QuietTab type="button">Library</QuietTab>
      <TabDivider />
      <QuietTab type="button">Shapes</QuietTab>
    </AssetTabs>
    <StyleGrid>
      {swatches.map(([bg, shadow, frequency], i) => (
        <StyleCell key={i} type="button" aria-label={`Style ${i + 1}`}>
          <StyleSwatch $bg={bg} $shadow={shadow}>
            {frequency && <Grain id={`grain-${i}`} frequency={frequency} />}
          </StyleSwatch>
        </StyleCell>
      ))}
      {textStyles.map(([color, shadow]) => (
        <StyleCell key={color} type="button"><StyleText $color={color} $shadow={shadow}>ABC</StyleText></StyleCell>
      ))}
    </StyleGrid>
    <StyleName>Style 21</StyleName>
    <ClippedHeader><PanelHeader><Caret />Frames and History</PanelHeader></ClippedHeader>
  </Dock>
);

const types = ['Graphic', 'Animation', 'Button'];

const SymbolDialog = () => {
  const [type, setType] = useState('Button');

  return (
    <Dialog onSubmit={(e) => e.preventDefault()}>
      <DialogTitle>
        Symbol Properties
        <CloseButton type="button" aria-label="Close dialog">
          <svg width="28" height="28" viewBox="0 0 28 28" stroke="#fff" strokeWidth="4"><path d="M4 4l20 20M24 4L4 24" /></svg>
        </CloseButton>
      </DialogTitle>
      <DialogBody>
        <Pane />
        <DialogForm>
          <FieldLabel htmlFor="symbol-name"><u>N</u>ame:</FieldLabel>
          <NameField id="symbol-name" defaultValue="Symbol" />
          <TypeLabel>Type:</TypeLabel>
          <RadioList role="radiogroup" aria-label="Type">
            {types.map((name) => (
              <RadioLabel key={name}>
                <input type="radio" name="type" checked={type === name} onChange={() => setType(name)} />
                <span><u>{name[0]}</u>{name.slice(1)}</span>
              </RadioLabel>
            ))}
          </RadioList>
          <DialogButtons>
            <DialogButton type="submit" $primary>OK</DialogButton>
            <DialogButton type="button">Cancel</DialogButton>
          </DialogButtons>
        </DialogForm>
      </DialogBody>
    </Dialog>
  );
};

const menus = ['Edit', 'View', 'Select', 'Modify', 'Text', 'Commands', 'Filters', 'Window', 'Help'];

const App = () => (
  <Page>
    <GlobalStyle />
    <TitleBar>
      <CaptionButton type="button" aria-label="Minimize window" />
      <CaptionButton type="button" aria-label="Maximize window" />
    </TitleBar>
    <MenuBar>
      {menus.map((name) => <MenuItem key={name} type="button">{name}</MenuItem>)}
    </MenuBar>
    <Workspace>
      <Tools />
      <Center>
        <DocumentWindow />
        <Properties />
        <Splitter type="button" aria-label="Collapse panels">
          <svg width="9" height="16" viewBox="0 0 9 16"><path d="M0 0l9 8-9 8z" fill="#fff" /></svg>
        </Splitter>
      </Center>
      <RightDock />
    </Workspace>
    <Taskbar>
      <Start type="button" aria-label="Start" />
      <TaskButton type="button" aria-label="Fireworks" />
      <Tray />
    </Taskbar>
    <SymbolDialog />
    <Note>{' I pressed F8 and\nconverted it into a\nbutton, as shown in\nthe picture.'}</Note>
    <Pointer width="500" height="310" viewBox="0 0 500 310">
      <path d="M5 6l472 284" stroke="#000" strokeWidth="2" />
      <path d="M489 297l-19-2 8-15z" />
    </Pointer>
  </Page>
);

export default App;
